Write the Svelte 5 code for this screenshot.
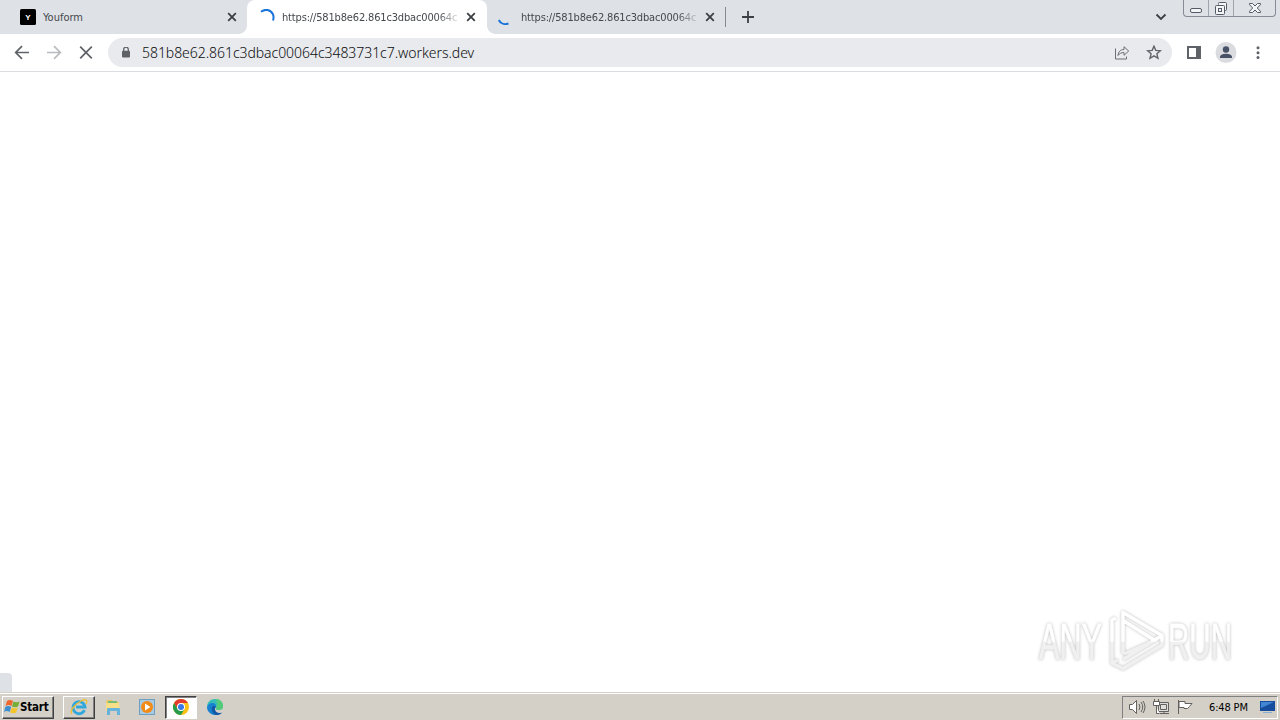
<script>
  const host = '581b8e62.861c3dbac00064c3483731c7.workers.dev'
  const pending = 'https://' + host.slice(0, 24)
  const tabs = [
    { title: 'Youform', icon: 'site' },
    { title: pending, icon: 'spin', active: true },
    { title: pending, icon: 'wait' }
  ]
</script>

<div class="screen">
  <header class="strip">
    {#each tabs as tab}
      <div class="tab" class:active={tab.active}>
        <svg class="favicon" width="16" height="16" viewBox="0 0 16 16">
          {#if tab.icon == 'site'}
            <rect width="16" height="16" rx="1.5" />
            <text x="8" y="11" text-anchor="middle" class="letter">Y</text>
          {:else if tab.icon == 'spin'}
            <path d="M2 2.700C6-.4 11.5.6 13.800 5c1 2 1 4 .2 6.500" class="arc" />
          {:else}
            <path d="M.8 11C2.500 14.500 6.500 16 10.500 14.500" class="arc" />
          {/if}
        </svg>
        <span class="title" class:long={tab.icon != 'site'}>{tab.title}</span>
        <svg class="close" width="10" height="10" viewBox="0 0 10 10"><path d="M1.200 1.200l7.600 7.600M8.800 1.200L1.200 8.800" /></svg>
      </div>
    {/each}
    <i class="divider"></i>
    <svg class="plus" width="14" height="14" viewBox="0 0 14 14"><path d="M7 1v12M1 7h12" /></svg>
    <svg class="chevron" width="12" height="8" viewBox="0 0 12 8"><path d="M1.500 1.500L6 6l4.500-4.500" /></svg>
    <div class="controls">
      <span class="min"><svg width="14" height="16" viewBox="0 0 14 16"><rect x="1.500" y="8.500" width="11" height="4" rx="1.500" /></svg></span>
      <span class="max"><svg width="14" height="16" viewBox="0 0 14 16"><path d="M4.500 4.500v-1q0-1 1-1h6q1 0 1 1v6q0 1-1 1h-1" /><rect x="1.500" y="5.500" width="9" height="9" rx="1" /><rect x="4.500" y="8.500" width="3" height="3" /></svg></span>
      <span class="quit"><svg width="14" height="16" viewBox="0 0 14 16"><path d="M1.500 3.500h3L7 6l2.500-2.500h3v1.200L9.300 8l3.200 3.300v1.200h-3L7 10l-2.500 2.500h-3v-1.200L4.700 8 1.500 4.700z" /></svg></span>
    </div>
  </header>

  <nav class="toolbar">
    <svg class="nav" width="16" height="16" viewBox="0 0 16 16"><path d="M15 7.500H2M8 1.200L1.700 7.500 8 13.800" /></svg>
    <svg class="nav off" width="16" height="16" viewBox="0 0 16 16"><path d="M1 7.500h13M8 1.200L14.300 7.500 8 13.800" /></svg>
    <svg class="nav" width="16" height="16" viewBox="0 0 16 16"><path d="M2.200 1.700l11.600 11.600M13.800 1.700L2.200 13.300" /></svg>
    <div class="omnibox">
      <svg class="lock" width="10" height="12" viewBox="0 0 10 12"><path d="M2.700 4.500v-2a2.300 2.300 0 0 1 4.600 0v2" fill="none" stroke="#5f6368" stroke-width="1.300" /><rect x="1" y="3.800" width="8" height="6.700" rx="1" fill="#5f6368" /></svg>
      <span class="url">{host}</span>
      <svg class="share" width="16" height="16" viewBox="0 0 16 16"><path d="M1.500 3.500v10.500h11v-2.500M4 10.500c.4-4 2.500-6 6-6V1.700L14.700 6 10 10.300V7.500c-2.700 0-4.500 1-6 3z" /></svg>
      <svg class="star" width="16" height="16" viewBox="0 0 16 16"><path d="M8 1.200l1.800 4.200 4.600.4-3.500 3 1.100 4.500L8 10.900l-4 2.400 1.100-4.500-3.500-3 4.600-.4z" /></svg>
    </div>
    <svg class="panel" width="14" height="14" viewBox="0 0 14 14"><path d="M0 0h14v13H0zM2 2v9h7V2z" fill-rule="evenodd" fill="#5f6368" /></svg>
    <svg class="avatar" width="22" height="22" viewBox="0 0 22 22"><circle cx="11" cy="10.500" r="10.500" fill="#dadce0" /><circle cx="11" cy="7.500" r="3.200" fill="#475268" /><path d="M5 16v-1.200c0-2.300 4-3.100 6-3.100s6 .8 6 3.100V16z" fill="#475268" /></svg>
    <svg class="dots" width="4" height="14" viewBox="0 0 4 14"><circle cx="2" cy="1.800" r="1.500" /><circle cx="2" cy="6.700" r="1.500" /><circle cx="2" cy="11.600" r="1.500" /></svg>
  </nav>

  <main>
    <div class="bubble"></div>
    <svg class="mark" width="210" height="76" viewBox="0 0 210 76">
      <defs>
        <linearGradient id="fade" x1="0" y1="0" x2="0" y2="76" gradientUnits="userSpaceOnUse">
          <stop offset=".54" stop-color="#fff" />
          <stop offset=".56" stop-color="#f0f0f0" />
        </linearGradient>
      </defs>
      <g class="words">
        <text x="9" y="58.500" textLength="63" lengthAdjust="spacingAndGlyphs">ANY</text>
        <text x="138" y="58.500" textLength="64" lengthAdjust="spacingAndGlyphs">RUN</text>
      </g>
      <path class="play" d="M93 54V12.500l39 23L93 59.500M94 21l31 19.500L94 54M86 18l-4 2v43l6-3M82 63l11 5.500 39-23.500v-9.500" />
    </svg>
  </main>

  <footer>
    <button class="start">
      <svg width="17" height="16" viewBox="0 0 17 16">
        <path d="M3 2q3-2 6 0L7.500 7q-3-2-6 0z" fill="#ed672e" />
        <path d="M9.500 2.500q3 1.500 6 0l-1.500 5q-3 1.500-6 0z" fill="#76ad36" />
        <path d="M1.200 8q3-2 6 0l-1.500 5q-3-2-5.500 0z" fill="#3d8fd0" />
        <path d="M7.700 8.500q3 1.500 6 0l-1.500 5q-3 1.500-6 0z" fill="#f5c52e" />
      </svg>
      <span>Start</span>
    </button>
    <div class="task raised">
      <svg width="18" height="18" viewBox="0 0 18 18">
        <path d="M14.500 12.200A6 6 0 1 1 15 9H6" fill="none" stroke="#32a7dc" stroke-width="2.800" />
        <path d="M2 16C-1 13 5 6 11 3c5-2.500 7-1 5 3" fill="none" stroke="#edbd35" stroke-width="1.300" />
      </svg>
    </div>
    <div class="task">
      <svg width="18" height="18" viewBox="0 0 18 18">
        <path d="M2 4l1-2h5l1 2h6v9H2z" fill="#e9c863" /><path d="M4 3h9v7H4z" fill="#78bc76" />
        <path d="M2 5h13l1 8H2z" fill="#f7df88" /><path d="M3 17v-6q0-1 1-1h11q1 0 1 1v6h-3v-4H6v4z" fill="#66b4dc" />
      </svg>
    </div>
    <div class="task">
      <svg width="18" height="18" viewBox="0 0 18 18">
        <rect x="1.500" y="1.500" width="15" height="15" fill="#a9cbe2" stroke="#6c9fc4" />
        <circle cx="9" cy="9" r="6" fill="#f28a18" /><path d="M7 5.500v7L12.500 9z" fill="#fff" />
      </svg>
    </div>
    <div class="task sunken">
      <svg width="18" height="18" viewBox="0 0 18 18">
        <circle cx="9" cy="9" r="8" fill="#fbc116" />
        <path d="M2.070 5A8 8 0 0 1 15.930 5H9L5.500 11z" fill="#e33b2e" />
        <path d="M2.070 5A8 8 0 0 0 9 17l3.500-6H5.500z" fill="#269b4b" />
        <circle cx="9" cy="9" r="4" fill="#fff" /><circle cx="9" cy="9" r="3" fill="#3b78e7" />
      </svg>
    </div>
    <div class="task">
      <svg width="18" height="18" viewBox="0 0 18 18">
        <path d="M1 9C1 4 4.500 1 9 1c5 0 8 3.500 8 7 0 3-2 4-4.500 4-2 0-3-.8-2.500-2 1-2-1-4-4-4-2.500 0-4 1-5 3z" fill="#36bdb7" />
        <path d="M10 1c4 0 7 3 7 7 0 3-2 4-4.500 4-2 0-3-.8-2.500-2 2-3 1-6 0-9z" fill="#55cb79" />
        <path d="M1 9c1-3 3-4 5-4 3 0 4.500 2 4 4-2 1-3 4 1 6 2 .8 4 .3 5-.5C13.500 17 11 17.300 9 17c-5-.4-8-4-8-8z" fill="#1682d0" />
        <path d="M6 9c-1 4 1 7 4 8 3 .2 5-1 6-2.500-3 1.500-7 0-7-3.500 0-1 .5-1.500 1-2-1-1-3-1.500-4 0z" fill="#1159a6" />
      </svg>
    </div>
    <div class="tray">
      <svg width="18" height="16" viewBox="0 0 18 16"><path d="M1.500 5.500h3l4-4v13l-4-4h-3z" fill="#fff" /><path d="M11 5q2 3 0 6M13 3q3.500 5 0 10M15 2q4 6 0 12" /></svg>
      <svg width="17" height="16" viewBox="0 0 17 16"><path d="M5.500 3.500h10v9h-10z" fill="#ddd" /><path d="M7.500 5.500h6v5h-6zM7 14.500h9M11 12v2" /><path d="M.5 2.500h6v4h-6zM1.500 0v2M5.500 0v2M3.500 7v7.500h3" fill="#fff" /></svg>
      <svg width="17" height="16" viewBox="0 0 17 16"><path d="M1.500 1v14" /><path d="M2 2.500h6v2h7l-2.500 3-2 2H7v-1H2z" fill="#fff" /></svg>
      <time>6:48 PM</time>
      <svg class="desk" width="17" height="16" viewBox="0 0 17 16"><path d="M1 2h15v10H1z" fill="#174d9d" stroke="none" /><path d="M2 3h13L2 9z" fill="#4285d2" stroke="none" /><path d="M4 13.500h9" stroke="#8baed5" /></svg>
    </div>
  </footer>
</div>

<style>
  :global(body) {
    background: #fff;
    overflow: hidden;
  }

  .screen {
    width: 1280px;
    height: 720px;
    display: flex;
    flex-direction: column;
    font-family: "DejaVu Sans Condensed", "DejaVu Sans", sans-serif;
    font-stretch: condensed;
  }

  svg {
    display: block;
    flex: none;
    fill: none;
  }

  .strip {
    height: 34px;
    flex: none;
    display: flex;
    align-items: center;
    background: #dee1e6;
  }

  .tab {
    width: 238px;
    height: 34px;
    box-sizing: border-box;
    display: flex;
    align-items: center;
    padding: 0 10px 0 12px;
    position: relative;
  }

  .tab:first-child {
    width: 247px;
    padding-left: 20px;
  }

  .tab.active {
    width: 240px;
    background: #fff;
    border-radius: 8px 8px 0 0;
    padding-right: 11px;
  }

  .tab:nth-child(3) {
    padding-left: 11px;
  }

  .active::before,
  .active::after {
    content: "";
    position: absolute;
    bottom: 0;
    width: 8px;
    height: 8px;
  }

  .active::before {
    left: -8px;
    background: radial-gradient(circle at 0 0, transparent 7.5px, #fff 8px);
  }

  .active::after {
    right: -8px;
    background: radial-gradient(circle at 100% 0, transparent 7.5px, #fff 8px);
  }

  .favicon rect {
    fill: #000;
  }

  .letter {
    fill: #fff;
    font: bold 8px "Liberation Sans", sans-serif;
  }

  .arc {
    stroke: #1a73d9;
    stroke-width: 2;
  }

  .title {
    flex: 1;
    min-width: 0;
    margin: 0 13px 0 7px;
    padding-top: 2px;
    overflow: hidden;
    white-space: nowrap;
    font-size: 11px;
    line-height: 16px;
    color: #45484d;
  }

  .long {
    letter-spacing: -0.16px;
    margin-right: 7px;
    -webkit-mask-image: linear-gradient(90deg, #000 155px, transparent 180px);
    mask-image: linear-gradient(90deg, #000 155px, transparent 180px);
  }

  .close,
  .plus,
  .chevron {
    stroke: #3c4043;
    stroke-width: 1.8;
  }

  .divider {
    width: 1px;
    height: 20px;
    background: #868a90;
  }

  .plus {
    margin-left: 15px;
  }

  .chevron {
    margin-left: auto;
    margin-right: 16px;
  }

  .controls {
    align-self: flex-start;
    height: 17px;
    width: 93px;
    box-sizing: border-box;
    margin-right: 4px;
    display: flex;
    border: 1px solid #868b95;
    border-top: 0;
    border-radius: 0 0 4px 4px;
  }

  .controls span {
    display: flex;
    justify-content: center;
  }

  .controls svg {
    stroke: #555b66;
    fill: #f3f4f6;
  }

  .min {
    width: 24px;
  }

  .max {
    width: 24px;
    border-left: 1px solid #a0a4ac;
    border-right: 1px solid #a0a4ac;
  }

  .quit {
    flex: 1;
  }

  .toolbar {
    height: 38px;
    box-sizing: border-box;
    flex: none;
    display: flex;
    align-items: center;
    padding: 0 20px 0 14px;
    border-bottom: 1px solid #dadce0;
    background: #fff;
  }

  .nav {
    stroke: #5f6368;
    stroke-width: 1.7;
    margin-right: 16px;
  }

  .off {
    stroke: #b9bbbe;
  }

  .omnibox {
    width: 1064px;
    height: 29px;
    box-sizing: border-box;
    margin-left: -2px;
    padding: 0 10px 0 13px;
    display: flex;
    align-items: center;
    border-radius: 15px;
    background: #e8eaed;
  }

  .url {
    margin-left: 11px;
    font: 300 14px/20px "Noto Sans", sans-serif;
    letter-spacing: -0.05px;
    color: #0c0d0e;
  }

  .share {
    margin-left: auto;
    margin-right: 16px;
    stroke: #6b6e72;
  }

  .star {
    stroke: #5f6368;
    stroke-width: 1.4;
  }

  .panel {
    margin-left: 15px;
  }

  .avatar {
    margin-left: 14px;
  }

  .dots {
    margin-left: auto;
    fill: #5f6368;
  }

  main {
    flex: 1;
    display: flex;
    align-items: flex-end;
    position: relative;
    background: #fff;
  }

  .bubble {
    width: 12px;
    height: 19px;
    background: #dee1e6;
    border-radius: 0 4px 0 0;
  }

  .mark {
    position: absolute;
    right: 40px;
    bottom: 16px;
    overflow: visible;
    filter: drop-shadow(0 0 1.5px #bbb);
  }

  .words {
    fill: url(#fade);
    stroke: url(#fade);
    stroke-width: 0.8;
    font: 50px "Liberation Sans", sans-serif;
  }

  .play {
    stroke: url(#fade);
    stroke-width: 3.5;
    stroke-linejoin: round;
  }

  footer {
    height: 28px;
    box-sizing: border-box;
    flex: none;
    display: flex;
    align-items: center;
    padding: 1px 2px 0;
    border-top: 1px solid #d4d0c8;
    box-shadow: inset 0 1px #fff;
    background: #d4d0c8;
  }

  .start {
    width: 52px;
    height: 23px;
    box-sizing: border-box;
    display: flex;
    align-items: center;
    padding: 0 0 0 1px;
    margin-right: 9px;
    border: 1px solid;
    border-color: #fff #404040 #404040 #fff;
    box-shadow: inset -1px -1px #808080;
    background: #d4d0c8;
    color: #000;
    font: bold 11.5px "DejaVu Sans Condensed", "DejaVu Sans", sans-serif;
    font-stretch: condensed;
    letter-spacing: -0.2px;
  }

  .start svg {
    margin-right: -1px;
  }

  .task {
    width: 32px;
    height: 23px;
    box-sizing: border-box;
    margin-right: 2px;
    display: flex;
    align-items: center;
    justify-content: center;
    border: 1px solid transparent;
  }

  .raised {
    border-color: #fff #404040 #404040 #fff;
    box-shadow: inset -1px -1px #808080;
  }

  .sunken {
    border-color: #404040 #fff #fff #404040;
    box-shadow: inset 1px 1px #808080;
    background: #fff;
  }

  .tray {
    width: 156px;
    height: 23px;
    box-sizing: border-box;
    margin-left: auto;
    padding: 0 1px 0 5px;
    display: flex;
    align-items: center;
    gap: 7px;
    border: 1px solid;
    border-color: #808080 #fff #fff #808080;
  }

  .tray svg {
    stroke: #62615d;
  }

  .tray .desk {
    margin-left: auto;
  }

  time {
    margin-left: 8px;
    font-size: 11px;
    letter-spacing: -0.15px;
    white-space: nowrap;
    color: #000;
  }
</style>
